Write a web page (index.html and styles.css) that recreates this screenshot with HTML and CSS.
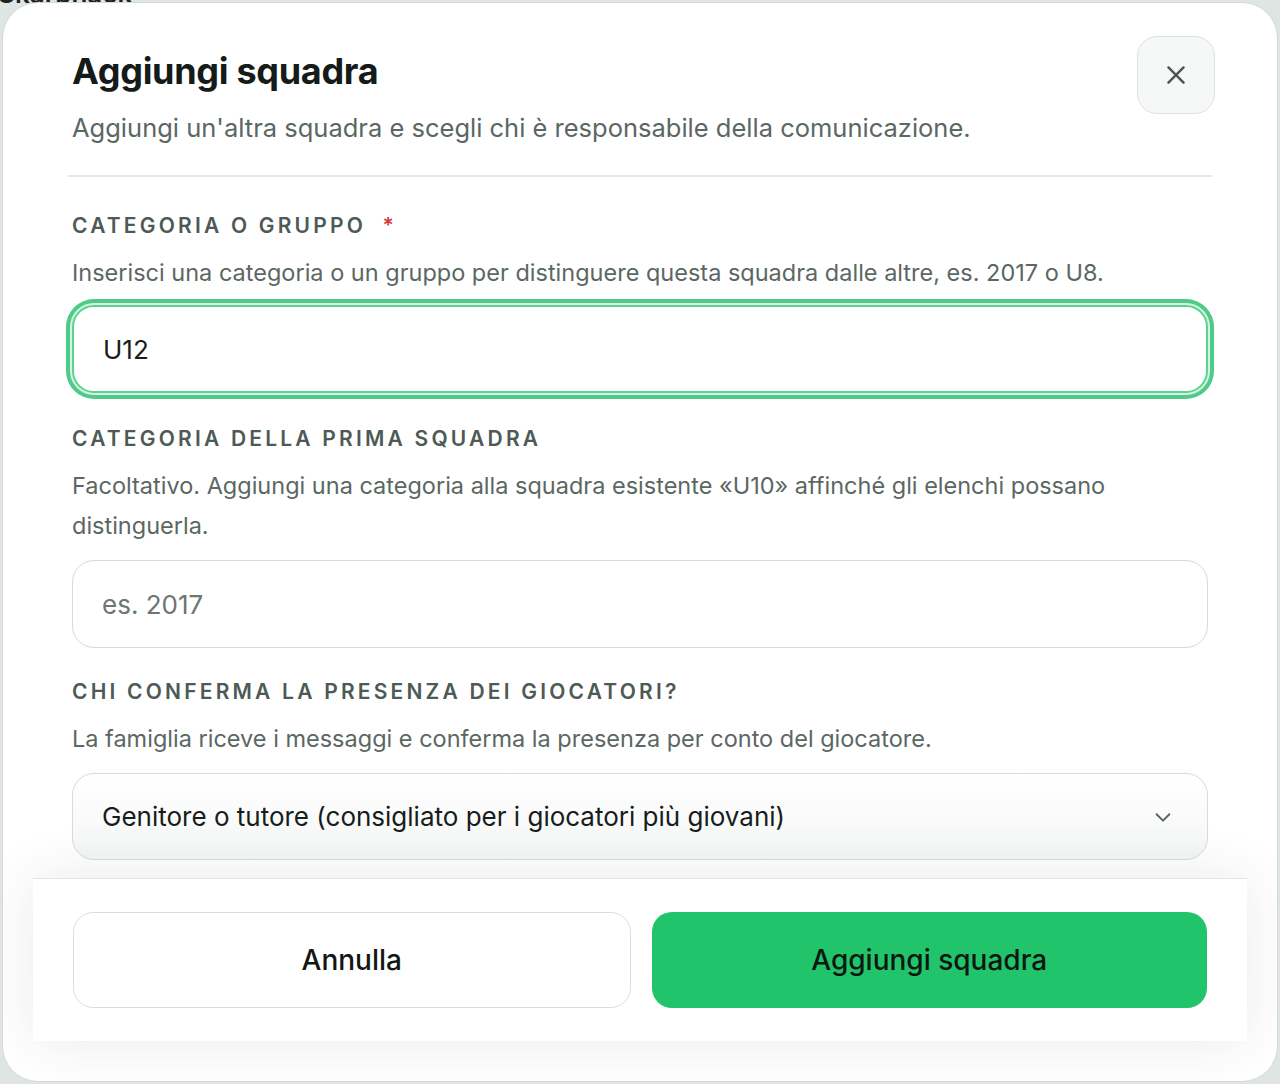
FILE: index.html
```html
<!DOCTYPE html>
<html lang="it">
<head>
  <meta charset="UTF-8" />
  <meta name="viewport" content="width=device-width, initial-scale=1.0"/>
  <title>Aggiungi squadra</title>
  <link rel="stylesheet" href="styles.css">
</head>
<body>
  <div class="page-behind">Skarpnäck</div>

  <div class="modal">
    <div class="modal-scroll">
      <div class="modal-header">
        <div class="header-text">
          <h2>Aggiungi squadra</h2>
          <p class="subtitle">Aggiungi un'altra squadra e scegli chi è responsabile della comunicazione.</p>
        </div>
        <button class="close-btn" type="button" aria-label="Chiudi">
          <svg width="26" height="26" viewBox="0 0 24 24" fill="none" stroke="#4a5551" stroke-width="2.2" stroke-linecap="round">
            <path d="M5 5 L19 19 M19 5 L5 19" />
          </svg>
        </button>
      </div>

      <div class="divider"></div>

      <form class="team-form">
        <div class="field">
          <label for="group">Categoria o gruppo <span class="required">*</span></label>
          <p class="help">Inserisci una categoria o un gruppo per distinguere questa squadra dalle altre, es. 2017 o U8.</p>
          <input class="text-input focused" type="text" id="group" value="U12" />
        </div>

        <div class="field">
          <label for="firstTeam">Categoria della prima squadra</label>
          <p class="help">Facoltativo. Aggiungi una categoria alla squadra esistente «U10» affinché gli elenchi possano distinguerla.</p>
          <input class="text-input" type="text" id="firstTeam" placeholder="es. 2017" />
        </div>

        <div class="field">
          <label for="confirm">Chi conferma la presenza dei giocatori?</label>
          <p class="help">La famiglia riceve i messaggi e conferma la presenza per conto del giocatore.</p>
          <div class="select-box">
            <span>Genitore o tutore (consigliato per i giocatori più giovani)</span>
            <svg width="22" height="22" viewBox="0 0 24 24" fill="none" stroke="#56615d" stroke-width="2" stroke-linecap="round" stroke-linejoin="round">
              <path d="M5 9 L12 16 L19 9" />
            </svg>
          </div>
        </div>
      </form>
    </div>

    <div class="modal-footer">
      <button class="btn btn-secondary" type="button">Annulla</button>
      <button class="btn btn-primary" type="button">Aggiungi squadra</button>
    </div>
  </div>
</body>
</html>
```

FILE: styles.css
```css
body {
  font-family: 'Inter', 'Noto Sans', sans-serif;
  margin: 0;
  padding: 0;
  background: #dfe5e3;
  height: 1084px;
  overflow: hidden;
  position: relative;
}

.page-behind {
  position: absolute;
  left: -2px;
  top: -22px;
  font-size: 26px;
  font-weight: 600;
  color: #1c2421;
}

.modal {
  position: relative;
  margin: 2px;
  height: 1080px;
  box-sizing: border-box;
  background: #fff;
  border: 1px solid #d3dad7;
  border-radius: 36px;
  overflow: hidden;
  display: flex;
  flex-direction: column;
}

.modal-scroll {
  flex: 1;
  overflow: hidden;
  padding: 0 69px;
}

.modal-header {
  display: flex;
  justify-content: space-between;
  align-items: flex-start;
  padding-top: 33px;
  margin-right: -7px;
}

.modal-header h2 {
  margin: 14px 0 0;
  font-size: 36px;
  line-height: 42px;
  font-weight: 700;
  letter-spacing: -0.3px;
  color: #151b19;
}

.subtitle {
  margin: 20px 0 0;
  font-size: 25.5px;
  line-height: 32px;
  color: #5b6763;
}

.close-btn {
  width: 78px;
  height: 78px;
  border-radius: 20px;
  border: 1.5px solid #dce2df;
  background: #f6f8f7;
  display: flex;
  align-items: center;
  justify-content: center;
  cursor: pointer;
  padding: 0;
}

.divider {
  height: 2px;
  background: #e4e8e6;
  margin: 31px -4px 0;
}

.team-form {
  padding-top: 31px;
}

.field {
  margin-bottom: 26px;
}

.field:first-child {
  margin-bottom: 28px;
}

.field label {
  display: block;
  font-size: 21px;
  line-height: 36px;
  font-weight: 600;
  letter-spacing: 3.2px;
  text-transform: uppercase;
  color: #4d5a55;
}

.required {
  color: #d23a3a;
  margin-left: 8px;
}

.help {
  margin: 9px 0 14px;
  font-size: 23.5px;
  line-height: 40px;
  color: #5b6763;
}

.text-input {
  display: block;
  width: 100%;
  box-sizing: border-box;
  height: 88px;
  padding: 0 29px;
  font-family: inherit;
  font-size: 26px;
  color: #171d1b;
  border: 1.5px solid #d6dcd9;
  border-radius: 22px;
  background: #fff;
  outline: none;
}

.text-input::placeholder {
  color: #6c7672;
}

.text-input.focused {
  margin-top: -2px;
  border: 2px solid #5ad393;
  box-shadow: 0 0 0 2px #d4f4e1, 0 0 0 6px #4fcb87;
}

.select-box {
  display: flex;
  align-items: center;
  justify-content: space-between;
  height: 87px;
  box-sizing: border-box;
  padding: 0 33px 0 29px;
  border: 1.5px solid #d6dcd9;
  border-radius: 22px;
  background: linear-gradient(#fff, #f4f6f5);
  font-size: 26px;
  color: #171d1b;
}

.modal-footer {
  display: flex;
  gap: 21px;
  margin: 0 30px 40px;
  padding: 33px 40px 33px;
  background: #fff;
  border-top: 1.5px solid #e2e6e4;
  box-shadow: 0 0 56px rgba(30, 50, 40, 0.1);
  position: relative;
}

.btn {
  flex: 1;
  height: 96px;
  border-radius: 20px;
  font-family: inherit;
  font-size: 28px;
  font-weight: 500;
  color: #111714;
  cursor: pointer;
}

.btn-secondary {
  background: #fff;
  border: 1.5px solid #d8dedb;
}

.btn-primary {
  background: #22c46b;
  border: none;
  color: #0b1710;
}
```
